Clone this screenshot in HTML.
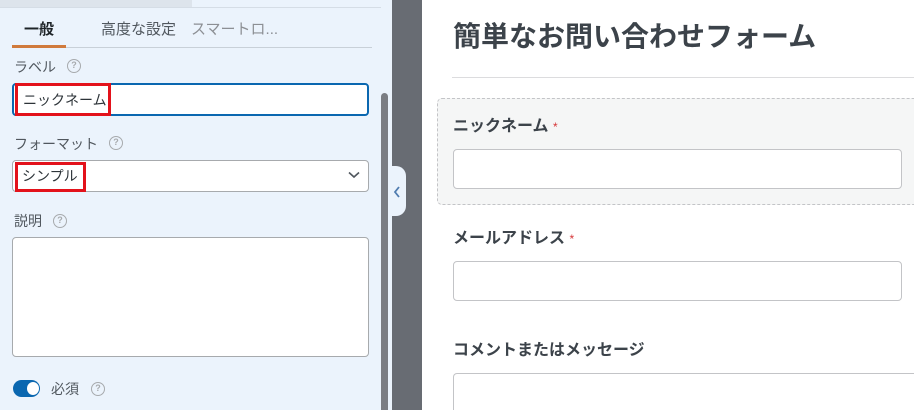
<!DOCTYPE html>
<html><head><meta charset="utf-8"><style>
*{box-sizing:border-box;margin:0;padding:0}
html,body{width:914px;height:410px;overflow:hidden}
body{position:relative;background:#fff;font-family:"Liberation Sans","Noto Sans CJK JP",sans-serif}
.a{position:absolute}
.lp{left:0;top:0;width:392px;height:410px;background:#ebf3fc}
.lbl{font-size:14px;color:#50575e}
.q{width:14px;height:14px;border:1.5px solid #a7aaad;border-radius:50%;font-size:9px;color:#a7aaad;text-align:center;line-height:11px;font-weight:bold}
.inp{background:#fff;border:1px solid #a7aaad;border-radius:4px}
.red{border:3px solid #e3121b}
.fl{font-size:16px;font-weight:bold;color:#3c434a}
.st{color:#d63638;font-size:12px;font-weight:normal}
.fi{background:#fff;border:1px solid #c3c4c7;border-radius:4px}
</style></head><body>
<div class="a lp"></div>
<div class="a" style="left:0;top:0;width:192px;height:7px;background:#dde4ec"></div>
<div class="a" style="left:0;top:7px;width:381px;height:1px;background:#d5dde6"></div>
<div class="a" style="left:24px;top:18px;font-size:15px;font-weight:bold;color:#1d2327">一般</div>
<div class="a" style="left:101px;top:18px;font-size:15px;color:#50575e">高度な設定</div>
<div class="a" style="left:191px;top:18px;font-size:15px;color:#8c8f94">スマートロ...</div>
<div class="a" style="left:12px;top:47px;width:360px;height:1px;background:#c8d0d8"></div>
<div class="a" style="left:12px;top:45px;width:54px;height:3px;background:#d07a3c"></div>
<div class="a lbl" style="left:14px;top:57px">ラベル</div>
<div class="a q" style="left:67px;top:59px">?</div>
<div class="a inp" style="left:12px;top:83px;width:357px;height:33px;border:2px solid #0a67b0"></div>
<div class="a red" style="left:15px;top:83px;width:96px;height:33px"></div>
<div class="a" style="left:23px;top:90px;font-size:14px;color:#2c3338">ニックネーム</div>
<div class="a lbl" style="left:14px;top:134px">フォーマット</div>
<div class="a q" style="left:109px;top:136px">?</div>
<div class="a inp" style="left:12px;top:160px;width:357px;height:32px"></div>
<div class="a red" style="left:15px;top:162px;width:71px;height:30px"></div>
<div class="a" style="left:22px;top:166px;font-size:14px;color:#2c3338">シンプル</div>
<svg class="a" style="left:348px;top:171px" width="12" height="8"><path d="M1 1.5L6 6L11 1.5" stroke="#50575e" stroke-width="1.6" fill="none"/></svg>
<div class="a lbl" style="left:14px;top:211px">説明</div>
<div class="a q" style="left:53px;top:214px">?</div>
<div class="a inp" style="left:12px;top:237px;width:357px;height:120px"></div>
<div class="a" style="left:13px;top:380px;width:27px;height:17px;background:#0a67b0;border-radius:9px"></div>
<div class="a" style="left:27px;top:382px;width:12px;height:13px;background:#fff;border-radius:50%"></div>
<div class="a lbl" style="left:51px;top:379px">必須</div>
<div class="a q" style="left:91px;top:382px">?</div>
<div class="a" style="left:381px;top:93px;width:7px;height:317px;background:#7a7d83;border-radius:4px 4px 0 0"></div>
<div class="a" style="left:392px;top:0;width:30px;height:410px;background:#686c73"></div>
<div class="a" style="left:392px;top:166px;width:14px;height:50px;background:#ebf3fc;border-radius:0 10px 10px 0"></div>
<svg class="a" style="left:392px;top:185px" width="10" height="14"><path d="M7 2L3 7L7 12" stroke="#4f7cb0" stroke-width="1.8" fill="none"/></svg>
<div class="a" style="left:453px;top:15px;font-size:28px;font-weight:bold;color:#3c434a">簡単なお問い合わせフォーム</div>
<div class="a" style="left:452px;top:77px;width:462px;height:1px;background:#dcdcde"></div>
<div class="a" style="left:437px;top:98px;width:490px;height:107px;background:#f5f6f6;border:1px dashed #c3c4c7;border-radius:5px"></div>
<div class="a fl" style="left:453px;top:112px">ニックネーム <span class="st">*</span></div>
<div class="a fi" style="left:453px;top:149px;width:449px;height:40px"></div>
<div class="a fl" style="left:453px;top:224px">メールアドレス <span class="st">*</span></div>
<div class="a fi" style="left:453px;top:261px;width:449px;height:40px"></div>
<div class="a fl" style="left:453px;top:336px">コメントまたはメッセージ</div>
<div class="a fi" style="left:453px;top:373px;width:470px;height:37px;border-bottom:none;border-radius:4px 0 0 0"></div>
</body></html>
